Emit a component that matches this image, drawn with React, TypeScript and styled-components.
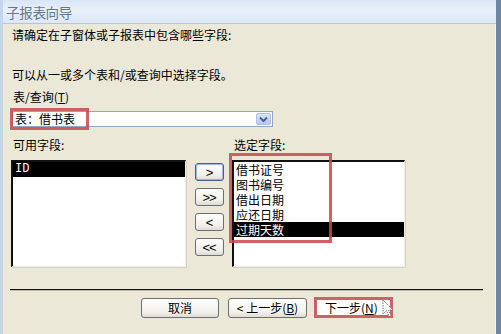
import React from "react";
import styled, { createGlobalStyle } from "styled-components";

const Global = createGlobalStyle`
  html, body { margin: 0; padding: 0; background: #ece9d8; }
  body { font-family: "Noto Sans CJK SC", "Noto Sans", sans-serif; }
  * { box-sizing: border-box; }
`;

const Window = styled.div`
  width: 501px;
  height: 334px;
  display: flex;
  flex-direction: column;
  background: #ebe8d8;
  border-left: 3px solid #c5d6ec;
  border-right: 5px solid #6f86a2;
  overflow: hidden;
  position: relative;
  font-family: "Noto Sans CJK SC", sans-serif;
  font-size: 12px;
  color: #000;
`;

const TitleBar = styled.div`
  height: 24px;
  flex: none;
  display: flex;
  align-items: center;
  padding-left: 3px;
  background: linear-gradient(#d9e5f5, #e8f0fb 45%, #dde8f6);
  border-bottom: 1px solid #b5c5dc;
  color: #66768b;
  font-size: 13.5px;
  letter-spacing: -0.3px;
`;

const Body = styled.div`
  flex: 1;
  display: flex;
  flex-direction: column;
  padding-left: 8px;
  border-right: 1px solid #f6f5ee;
`;

const Text = styled.div<{ $top: number; $indent?: number }>`
  margin-top: ${(p) => p.$top}px;
  padding-left: ${(p) => p.$indent ?? 1}px;
  height: 14px;
  line-height: 14px;
  white-space: nowrap;
`;

const U = styled.span`
  text-decoration: underline;
`;

const ComboWrap = styled.div`
  position: relative;
  margin-top: 7px;
  margin-left: 1px;
  width: 261px;
  height: 16px;
`;

const Combo = styled.div`
  width: 100%;
  height: 100%;
  background: #fff;
  border: 1px solid #8ea4bf;
  display: flex;
  align-items: center;
  padding-left: 2px;
  line-height: 14px;
`;

const DropBtn = styled.div`
  margin-left: auto;
  width: 15px;
  height: 12px;
  margin-right: 1px;
  border-radius: 2px;
  background: linear-gradient(#d6e3fb, #b3c9f3);
  border: 1px solid #aebfe2;
  display: flex;
  align-items: center;
  justify-content: center;
`;

const Highlight = styled.div<{ $l: number; $t: number; $w: number; $h: number }>`
  position: absolute;
  left: ${(p) => p.$l}px;
  top: ${(p) => p.$t}px;
  width: ${(p) => p.$w}px;
  height: ${(p) => p.$h}px;
  border: 3px solid rgba(196, 72, 76, 0.85);
  pointer-events: none;
`;

const Cols = styled.div<{ $top: number }>`
  margin-top: ${(p) => p.$top}px;
  display: grid;
  grid-template-columns: 175px 46px 173px;
`;

const Label = styled.div`
  height: 14px;
  line-height: 14px;
  padding-left: 2px;
  white-space: nowrap;
`;

const ListBox = styled.div`
  position: relative;
  height: 107px;
  background: #fff;
  border-top: 2px solid #111;
  border-left: 2px solid #111;
  border-right: 1px solid #f0efe6;
  border-bottom: 1px solid #f0efe6;
  box-shadow: 1px 1px 0 #d6d3c4;
`;

const Row = styled.div<{ $sel?: boolean; $mono?: boolean }>`
  height: 15px;
  line-height: 15px;
  padding-left: 2px;
  background: ${(p) => (p.$sel ? "#000" : "transparent")};
  color: ${(p) => (p.$sel ? "#fff" : "#000")};
  font-family: ${(p) =>
    p.$mono ? '"Liberation Mono", monospace' : '"Noto Sans CJK SC", sans-serif'};
  font-size: 12px;
  white-space: nowrap;
`;

const MidCol = styled.div`
  display: flex;
  flex-direction: column;
  align-items: center;
  gap: 7px;
  padding-top: 3px;
`;

const SmallBtn = styled.div<{ $focus?: boolean }>`
  width: 29px;
  height: 18px;
  border: 1px solid ${(p) => (p.$focus ? "#4a5f8c" : "#6b6f74")};
  border-radius: 3px;
  background: linear-gradient(#fdfdfb, #f1f0ea 70%, #dedbd0);
  box-shadow: ${(p) => (p.$focus ? "inset 0 0 0 1px #9db5e8" : "none")};
  display: flex;
  align-items: center;
  justify-content: center;
  font-family: "Liberation Sans", sans-serif;
  font-size: 13px;
  letter-spacing: -1px;
`;

const Separator = styled.div`
  margin-top: 22px;
  margin-left: -1px;
  width: 473px;
  height: 2px;
  border-top: 1px solid #111;
  border-bottom: 1px solid #bdbaa9;
`;

const ButtonRow = styled.div`
  margin-top: 7px;
  margin-left: 130px;
  display: flex;
  gap: 9px;
`;

const Button = styled.div<{ $w: number }>`
  position: relative;
  width: ${(p) => p.$w}px;
  height: 20px;
  border: 1px solid #6b6f74;
  border-radius: 3px;
  background: linear-gradient(#fefefd, #f3f2ec 70%, #e0ddd2);
  display: flex;
  align-items: center;
  justify-content: center;
  white-space: nowrap;
  line-height: 14px;
`;

const NextBtn = styled(Button)`
  border-color: #fff;
  justify-content: flex-start;
  padding-left: 8px;
  background: #fefefe;
`;

const Cursor = styled.svg`
  position: absolute;
  right: -2px;
  top: 0px;
`;

export default function App() {
  const fields = ["借书证号", "图书编号", "借出日期", "应还日期", "过期天数"];
  return (
    <>
      <Global />
      <Window>
        <TitleBar>子报表向导</TitleBar>
        <Body>
          <Text $top={4}>请确定在子窗体或子报表中包含哪些字段:</Text>
          <Text $top={26}>可以从一或多个表和/或查询中选择字段。</Text>
          <Text $top={8} $indent={2}>
            表/查询(<U>T</U>)
          </Text>
          <ComboWrap>
            <Combo>
              表：借书表
              <DropBtn>
                <svg width="9" height="7" viewBox="0 0 9 7">
                  <path d="M1 1.5 L4.5 5 L8 1.5" fill="none" stroke="#4d6185" strokeWidth="2" />
                </svg>
              </DropBtn>
            </Combo>
            <Highlight $l={-2} $t={-3} $w={79} $h={22} />
          </ComboWrap>
          <Cols $top={11}>
            <Label>可用字段:</Label>
            <div />
            <Label>选定字段:</Label>
          </Cols>
          <Cols $top={8}>
            <ListBox>
              <Row $sel $mono>
                ID
              </Row>
            </ListBox>
            <MidCol>
              <SmallBtn $focus>&gt;</SmallBtn>
              <SmallBtn>&gt;&gt;</SmallBtn>
              <SmallBtn>&lt;</SmallBtn>
              <SmallBtn>&lt;&lt;</SmallBtn>
            </MidCol>
            <ListBox>
              {fields.map((f, i) => (
                <Row key={f} $sel={i === fields.length - 1}>
                  {f}
                </Row>
              ))}
              <Highlight $l={-5} $t={-9} $w={103} $h={90} />
            </ListBox>
          </Cols>
          <Separator />
          <ButtonRow>
            <Button $w={78}>取消</Button>
            <Button $w={79}>
              &lt; 上一步(<U>B</U>)
            </Button>
            <NextBtn $w={77}>
              下一步(<U>N</U>)
              <Highlight $l={-3} $t={-2} $w={79} $h={21} />
              <Cursor width="12" height="20" viewBox="0 0 12 20">
                <path
                  d="M1 1 L1 15 L4.5 11.5 L7 17.5 L9 16.5 L6.5 11 L11 11 Z"
                  fill="#fff"
                  stroke="#777"
                  strokeWidth="1"
                  strokeDasharray="1.5 1"
                />
              </Cursor>
            </NextBtn>
          </ButtonRow>
        </Body>
      </Window>
    </>
  );
}
